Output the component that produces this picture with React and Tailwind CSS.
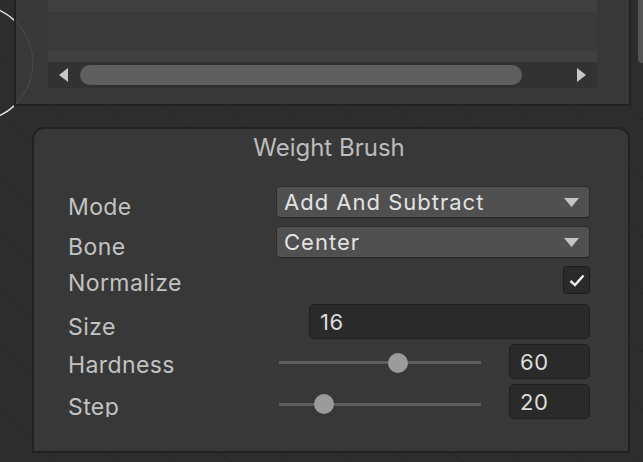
import React from "react";

const font = { fontFamily: "Inter, 'Noto Sans', sans-serif" };

function Caret() {
  return (
    <svg width="15" height="9" viewBox="0 0 15 9" className="shrink-0">
      <path d="M0 0 H15 L7.5 9 Z" fill="#c4c4c4" />
    </svg>
  );
}

function Dropdown({ value }) {
  return (
    <div className="flex h-full flex-1 items-center justify-between rounded-[4px] border border-[#2e2e2e] border-b-[#232323] bg-[#505050] pl-[7px] pr-[10px] text-[22px] leading-none tracking-[1px] text-[#e2e2e2]">
      <span>{value}</span>
      <Caret />
    </div>
  );
}

function Field({ value, className = "" }) {
  return (
    <div
      className={`flex h-full items-center rounded-[5px] border border-[#1f1f1f] bg-[#2a2a2a] pl-[10px] text-[22px] leading-none tracking-[0.5px] text-[#dcdcdc] ${className}`}
    >
      {value}
    </div>
  );
}

function Slider({ pos }) {
  return (
    <div className="relative flex h-full w-[202px] items-center">
      <div className="h-[3px] w-full bg-[#5d5d5d]" />
      <div
        className="absolute h-[20px] w-[20px] -translate-x-1/2 rounded-full bg-[#9b9b9b]"
        style={{ left: `${pos}px` }}
      />
    </div>
  );
}

function Label({ children, pad, w = "w-[208px]", clip = "" }) {
  return (
    <div className={`${w} shrink-0 ${pad}`}>
      <div className={`text-[23px] leading-[28px] tracking-[0.4px] text-[#c2c2c2] ${clip}`}>{children}</div>
    </div>
  );
}

export default function App() {
  return (
    <div
      className="relative h-[462px] w-[643px] overflow-hidden bg-[repeating-linear-gradient(45deg,#2d2d2d_0px,#2d2d2d_40px,#262626_40px,#262626_41px)]"
      style={font}
    >
      {/* top panel */}
      <div className="ml-[14px] w-[617px] border-x-2 border-b-2 border-[#222222] bg-[#383838] px-[32px] pb-[16px]">
        <div className="h-[12px] bg-[#404040]" />
        <div className="h-[39px] bg-[#3a3a3a]" />
        <div className="h-[11px] bg-[#404040]" />
        <div className="flex h-[26px] items-center bg-[#323232] pl-[11px] pr-[11px]">
          <svg width="9" height="14" viewBox="0 0 9 14">
            <path d="M9 0 V14 L0 7 Z" fill="#c8c8c8" />
          </svg>
          <div className="ml-[12px] h-[20px] w-[442px] rounded-full bg-[#5f5f5f]" />
          <svg width="9" height="14" viewBox="0 0 9 14" className="ml-auto">
            <path d="M0 0 V14 L9 7 Z" fill="#c8c8c8" />
          </svg>
        </div>
      </div>

      {/* bottom panel */}
      <div className="ml-[32px] mt-[21px] h-[326px] w-[598px] rounded-t-[12px] border-2 border-[#222222] bg-[#383838] pl-[34px] pr-[38px]">
        <div className="mt-[4px] text-center text-[24px] leading-[30px] text-[#bcbcbc]">Weight Brush</div>

        <div className="mt-[23px] flex h-[32px] items-center">
          <Label pad="pt-[9px]">Mode</Label>
          <Dropdown value="Add And Subtract" />
        </div>
        <div className="mt-[8px] flex h-[32px] items-center">
          <Label pad="pt-[9px]">Bone</Label>
          <Dropdown value="Center" />
        </div>
        <div className="mt-[8px] flex h-[28px] items-center">
          <Label pad="pt-[6px]">Normalize</Label>
          <div className="ml-auto flex h-[28px] w-[27px] items-center justify-center rounded-[4px] border border-[#1d1d1d] bg-[#2a2a2a]">
            <svg width="16" height="13" viewBox="0 0 16 13">
              <path d="M1.5 7 L6 11 L14.5 1.5" fill="none" stroke="#f2f2f2" strokeWidth="2.4" />
            </svg>
          </div>
        </div>
        <div className="mt-[10px] flex h-[35px] items-center">
          <Label pad="pt-[10px]" w="w-[241px]">Size</Label>
          <Field value="16" className="flex-1" />
        </div>
        <div className="mt-[5px] flex h-[35px] items-center">
          <Label pad="pt-[7px]" w="w-[211px]">Hardness</Label>
          <div className="h-full pt-[2px]">
            <Slider pos={119} />
          </div>
          <Field value="60" className="ml-auto w-[81px]" />
        </div>
        <div className="mt-[5px] flex h-[35px] items-center">
          <Label pad="pt-[6px]" w="w-[211px]" clip="h-[24px] overflow-hidden">Step</Label>
          <div className="h-full pt-[5px]">
            <Slider pos={45} />
          </div>
          <Field value="20" className="ml-auto w-[81px]" />
        </div>
      </div>

      {/* right window scrollbar */}
      <div className="absolute right-0 top-0 h-[63px] w-[5px] rounded-bl-[4px] bg-[#555555]" />

      {/* circle gizmo */}
      <svg className="absolute left-0 top-0" width="40" height="130" viewBox="0 0 40 130">
        <defs>
          <clipPath id="outside">
            <rect x="0" y="0" width="14" height="130" />
          </clipPath>
          <clipPath id="inside">
            <rect x="16" y="0" width="24" height="104" />
          </clipPath>
        </defs>
        <circle cx="-25" cy="63" r="58" fill="none" stroke="#4a4a4a" strokeWidth="1" clipPath="url(#inside)" />
        <circle cx="-25" cy="63" r="58" fill="none" stroke="#e8e8e8" strokeWidth="1.4" clipPath="url(#outside)" />
      </svg>
    </div>
  );
}
